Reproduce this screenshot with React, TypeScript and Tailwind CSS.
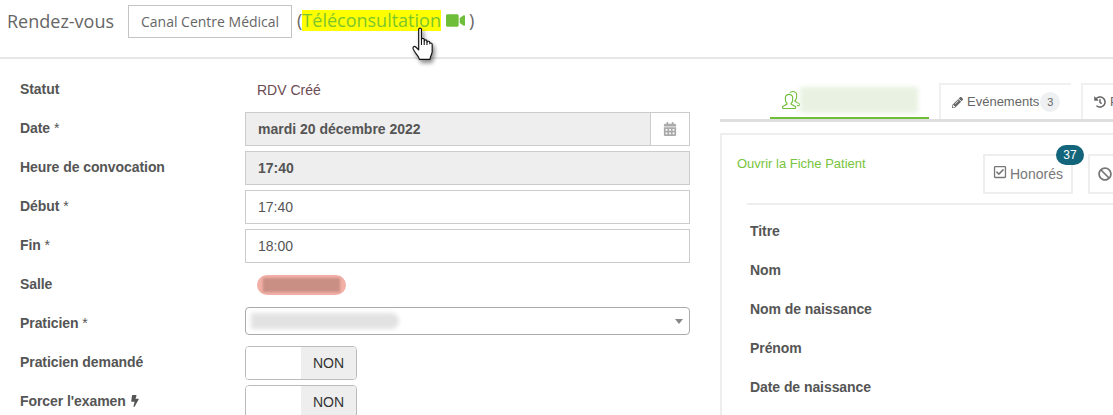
import { FaBan, FaBolt, FaCalendarAlt, FaHistory, FaPencilAlt, FaRegCheckSquare, FaVideo } from "react-icons/fa";
import { SlPeople } from "react-icons/sl";

const patientFields = ["Titre", "Nom", "Nom de naissance", "Prénom", "Date de naissance"];

function Toggle() {
  return (
    <div className="flex h-[34px] w-[112px] overflow-hidden rounded-[4px] border border-[#bbb]">
      <div className="w-[55px] bg-white" />
      <div className="flex flex-1 items-center justify-center bg-[#eee] text-[14px] text-[#333]">NON</div>
    </div>
  );
}

function Row({
  label,
  children,
  className = "",
  labelClass = "-mt-[2px]",
}: {
  label: React.ReactNode;
  children: React.ReactNode;
  className?: string;
  labelClass?: string;
}) {
  return (
    <div className={`flex items-center ${className}`}>
      <div className={`w-[225px] shrink-0 text-[14px] font-bold tracking-[-0.07px] text-[#555] ${labelClass}`}>{label}</div>
      <div className="flex-1">{children}</div>
    </div>
  );
}

function HandCursor() {
  return (
    <svg
      width="26"
      height="34"
      viewBox="0 0 24 32"
      className="absolute left-[411px] top-[27px] drop-shadow-[2px_3px_2px_rgba(0,0,0,0.45)]"
    >
      <path
        d="M7 2.2c0-1.6 2.6-1.6 2.6 0v9.6c0-1.4 2.6-1.4 2.6 0v1.4c0-1.4 2.6-1.4 2.6 0v1.2c0-1.4 2.7-1.2 2.7.2v1.2c0-1.2 2.2-1 2.2.6v6.6c0 2-1 3.4-1.6 5.2-.2.8-.4 1.4-.4 2.2H7.6c-.2-2-1.4-3-2.6-4.6-1.2-1.6-2.6-3.6-3.2-5.2-.6-1.8 1-3 2.4-1.8l2.8 2.8V2.2z"
        fill="#fff"
        stroke="#111"
        strokeWidth="1.1"
        strokeLinejoin="round"
      />
      <path d="M9.6 11.8V17M12.2 13.2V17M14.8 14.4V17" stroke="#111" strokeWidth="1" fill="none" />
    </svg>
  );
}

export default function App() {
  return (
    <div className="relative h-[415px] w-[1113px] overflow-hidden bg-white font-['Liberation_Sans',sans-serif]">
      {/* Header */}
      <header className="flex h-[59px] items-start border-b-2 border-[#e7e7e7] pl-[7px] pt-[5px] font-['Open_Sans',sans-serif] text-[#666]">
        <span className="mt-[2px] text-[18px] leading-[28px]">Rendez-vous</span>
        <span className="ml-[14px] flex h-[33px] w-[164px] items-center justify-center border border-[#c4c4c4] text-[14px]">
          Canal Centre Médical
        </span>
        <span className="ml-[5px] mt-[2px] flex items-center text-[18px] leading-[26px]">
          (
          <span className="flex h-[21px] items-center bg-[#ffff00] text-[#7cc62c]">Téléconsultation</span>
          <FaVideo size={19} className="ml-[5px] text-[#6fbe3a]" />
          <span className="ml-[4px]">)</span>
        </span>
      </header>
      <HandCursor />

      <div className="flex">
        {/* Formulaire */}
        <section className="w-[720px] shrink-0 pl-[20px] pr-[30px]">
          <Row label="Statut" className="mt-[19px] h-[24px]">
            <div className="pl-[12px] text-[14px] text-[#6b4a52]">RDV Créé</div>
          </Row>
          <Row label={<>Date <span className="font-normal">*</span></>} className="mt-[10px]">
            <div className="flex h-[34px] border border-[#ccc]">
              <div className="flex flex-1 items-center bg-[#eee] pl-[12px] text-[14px] font-bold text-[#555]">mardi 20 décembre 2022</div>
              <div className="flex w-[39px] items-center justify-center border-l border-[#ccc] bg-white">
                <FaCalendarAlt size={14} className="text-[#aaa]" />
              </div>
            </div>
          </Row>
          <Row label="Heure de convocation" className="mt-[5px]">
            <div className="flex h-[34px] items-center border border-[#ccc] bg-[#eee] pl-[12px] text-[14px] font-bold text-[#555]">17:40</div>
          </Row>
          <Row label={<>Début <span className="font-normal">*</span></>} className="mt-[5px]">
            <div className="flex h-[34px] items-center border border-[#ccc] bg-white pl-[12px] text-[14px] text-[#555]">17:40</div>
          </Row>
          <Row label={<>Fin <span className="font-normal">*</span></>} className="mt-[5px]">
            <div className="flex h-[34px] items-center border border-[#ccc] bg-white pl-[12px] text-[14px] text-[#555]">18:00</div>
          </Row>
          <Row label="Salle" className="mt-[12px]">
            <div className="ml-[12px] flex h-[20px] w-[89px] items-center justify-center rounded-full bg-[#f2afa6]">
              <div className="h-[14px] w-[77px] bg-[#c98e84] blur-[1px]" />
            </div>
          </Row>
          <Row label={<>Praticien <span className="font-normal">*</span></>} className="mt-[12px]" labelClass="mt-[4px]">
            <div className="relative flex h-[28px] items-center rounded-[4px] border border-[#aaa] bg-white pl-[5px]">
              <div className="h-[16px] w-[148px] rounded-r-full bg-[#e2e2e2] blur-[2px]" />
              <div className="absolute right-[6px] top-[11px] h-0 w-0 border-x-[4px] border-t-[5px] border-x-transparent border-t-[#888]" />
            </div>
          </Row>
          <Row label="Praticien demandé" className="mt-[11px]">
            <Toggle />
          </Row>
          <Row label={<span className="flex items-center gap-[3px]">Forcer l'examen <FaBolt size={12} className="text-[#555]" /></span>} className="mt-[5px]">
            <Toggle />
          </Row>
        </section>

        {/* Patient */}
        <section className="min-w-0 flex-1">
          <div className="mt-[24px] flex h-[39px] border-b-[3px] border-[#dfdfdf] pl-[50px]">
            <div className="flex h-[36px] w-[159px] shrink-0 items-center border-b-[2px] border-[#6fbe3a] pl-[12px]">
              <SlPeople size={18} className="text-[#6fbe3a]" />
              <div className="h-[26px] w-[118px] bg-[#e9f2e2] blur-[2px]" />
            </div>
            <div className="ml-[10px] flex w-[132px] shrink-0 items-center gap-[4px] border-l-2 border-t-2 border-[#f0f0f0] pl-[11px] text-[13px] text-[#666]">
              <FaPencilAlt size={11} />
              Evénements
              <span className="-ml-[3px] flex h-[20px] w-[20px] items-center justify-center rounded-full bg-[#eef0f2] text-[11px]">3</span>
            </div>
            <div className="ml-[10px] flex flex-1 items-center gap-[4px] border-l-2 border-t-2 border-[#f0f0f0] pl-[11px] text-[13px] text-[#666]">
              <FaHistory size={12} />
              P
            </div>
          </div>
          <div className="mt-[11px] h-[300px] border-2 border-r-0 border-[#eee] pl-[15px]">
            <div className="flex">
              <a className="mt-[19px] w-[246px] text-[13px] text-[#78c440]" href="#">Ouvrir la Fiche Patient</a>
              <div className="relative mt-[19px] flex h-[40px] w-[90px] shrink-0 items-center gap-[3px] border-2 border-[#eee] pl-[8px] text-[14px] text-[#777]">
                <FaRegCheckSquare size={14} className="-mt-[4px]" />
                Honorés
                <span className="absolute -right-[13px] -top-[11px] flex h-[20px] w-[28px] items-center justify-center rounded-full bg-[#12657a] text-[12px] text-white">37</span>
              </div>
              <div className="ml-[15px] mt-[19px] flex h-[40px] flex-1 items-center border-2 border-r-0 border-[#eee] pl-[8px] text-[#777]">
                <FaBan size={14} />
              </div>
            </div>
            <div className="ml-[10px] mt-[9px] border-t-2 border-[#eee] pl-[3px] pt-[16px]">
              {patientFields.map((f) => (
                <div key={f} className="flex h-[39px] items-start text-[14px] font-bold tracking-[-0.07px] text-[#555]">{f}</div>
              ))}
            </div>
          </div>
        </section>
      </div>
    </div>
  );
}
